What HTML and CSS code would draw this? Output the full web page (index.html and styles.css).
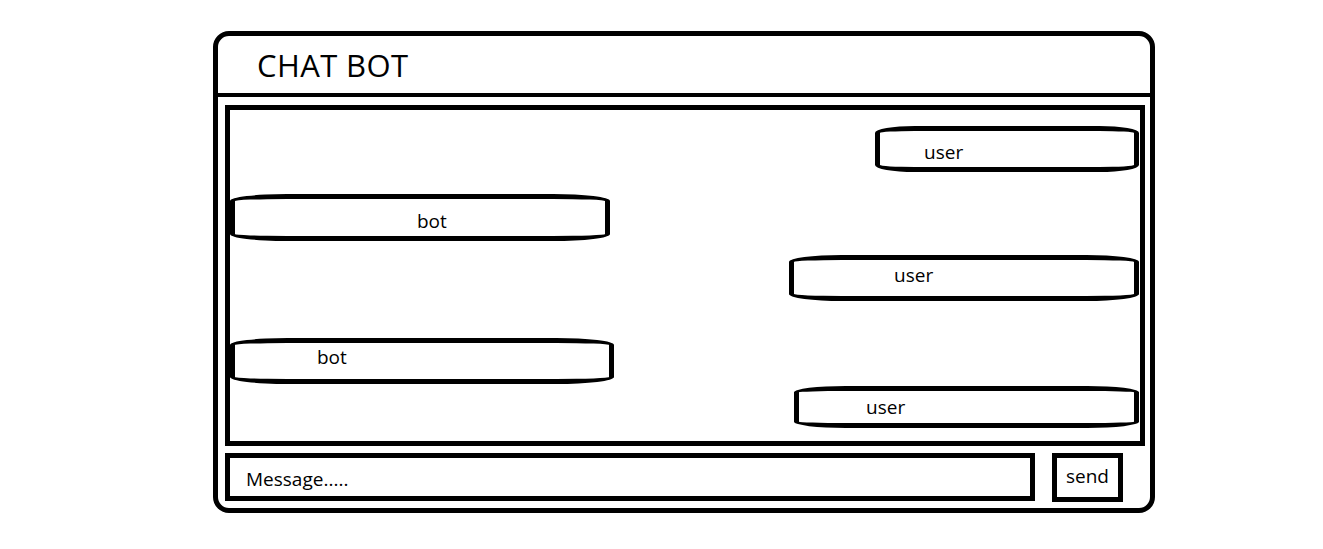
FILE: index.html
```html
<!DOCTYPE html>
<html lang="en">
<head>
<meta charset="utf-8">
<title>Chat Bot</title>
<link rel="stylesheet" href="styles.css">
</head>
<body>
  <div class="chat">
    <header class="chat-header">
      <h1 class="chat-title">CHAT BOT</h1>
    </header>
    <main class="chat-log">
      <div class="bubble bubble-user msg-1">user</div>
      <div class="bubble bubble-bot msg-2">bot</div>
      <div class="bubble bubble-user msg-3">user</div>
      <div class="bubble bubble-bot msg-4">bot</div>
      <div class="bubble bubble-user msg-5">user</div>
    </main>
    <form class="chat-form">
      <input class="chat-input" type="text" placeholder="Message.....">
      <button class="chat-send" type="button">send</button>
    </form>
  </div>
</body>
</html>
```
FILE: styles.css
```css
* {
  box-sizing: border-box;
}

html, body {
  margin: 0;
  padding: 0;
  background: #fff;
}

body {
  font-family: "Open Sans", "Noto Sans", "DejaVu Sans", sans-serif;
  color: #000;
}

.chat {
  width: 942px;
  height: 482px;
  margin: 31px 0 0 213px;
  border: 5px solid #000;
  border-radius: 16px;
  display: flex;
  flex-direction: column;
}

.chat-header {
  height: 61px;
  flex: none;
  border-bottom: 4px solid #000;
  display: flex;
  align-items: center;
  padding-left: 39px;
}

.chat-title {
  margin: 0;
  font-size: 31px;
  font-weight: 400;
  letter-spacing: 0.4px;
  line-height: 1;
  padding-top: 2px;
}

.chat-log {
  height: 341px;
  flex: none;
  margin: 8px 5px 0 7px;
  border: 5px solid #000;
  display: flex;
  flex-direction: column;
  padding-right: 1px;
  overflow: hidden;
}

.bubble {
  border: 5px solid #000;
  border-radius: 15%;
  display: flex;
  align-items: center;
  font-size: 19px;
  line-height: 1;
  flex: none;
}

.bubble-user {
  align-self: flex-end;
}

.bubble-bot {
  align-self: flex-start;
}

.msg-1 { margin-top: 16px; width: 264px; height: 46px; padding: 7px 0 0 44px; }
.msg-2 { margin-top: 22px; width: 380px; height: 47px; padding: 7px 0 0 182px; }
.msg-3 { margin-top: 14px; width: 350px; height: 46px; padding: 0 0 6px 100px; }
.msg-4 { margin-top: 37px; width: 384px; height: 46px; padding: 0 0 8px 82px; }
.msg-5 { margin-top: 2px;  width: 345px; height: 42px; padding: 0 0 0 67px; }

.chat-form {
  display: flex;
  gap: 17px;
  margin: 7px 27px 0 7px;
  height: 49px;
  flex: none;
}

.chat-input {
  flex: 1;
  height: 48px;
  border: 5px solid #000;
  border-radius: 0;
  padding: 4px 0 0 16px;
  font-family: inherit;
  font-size: 19px;
  color: #000;
  outline: none;
  background: #fff;
}

.chat-input::placeholder {
  color: #000;
  opacity: 1;
}

.chat-send {
  width: 71px;
  height: 49px;
  border: 5px solid #000;
  border-radius: 0;
  background: #fff;
  font-family: inherit;
  font-size: 19px;
  color: #000;
  padding: 0 0 3px;
}
```
